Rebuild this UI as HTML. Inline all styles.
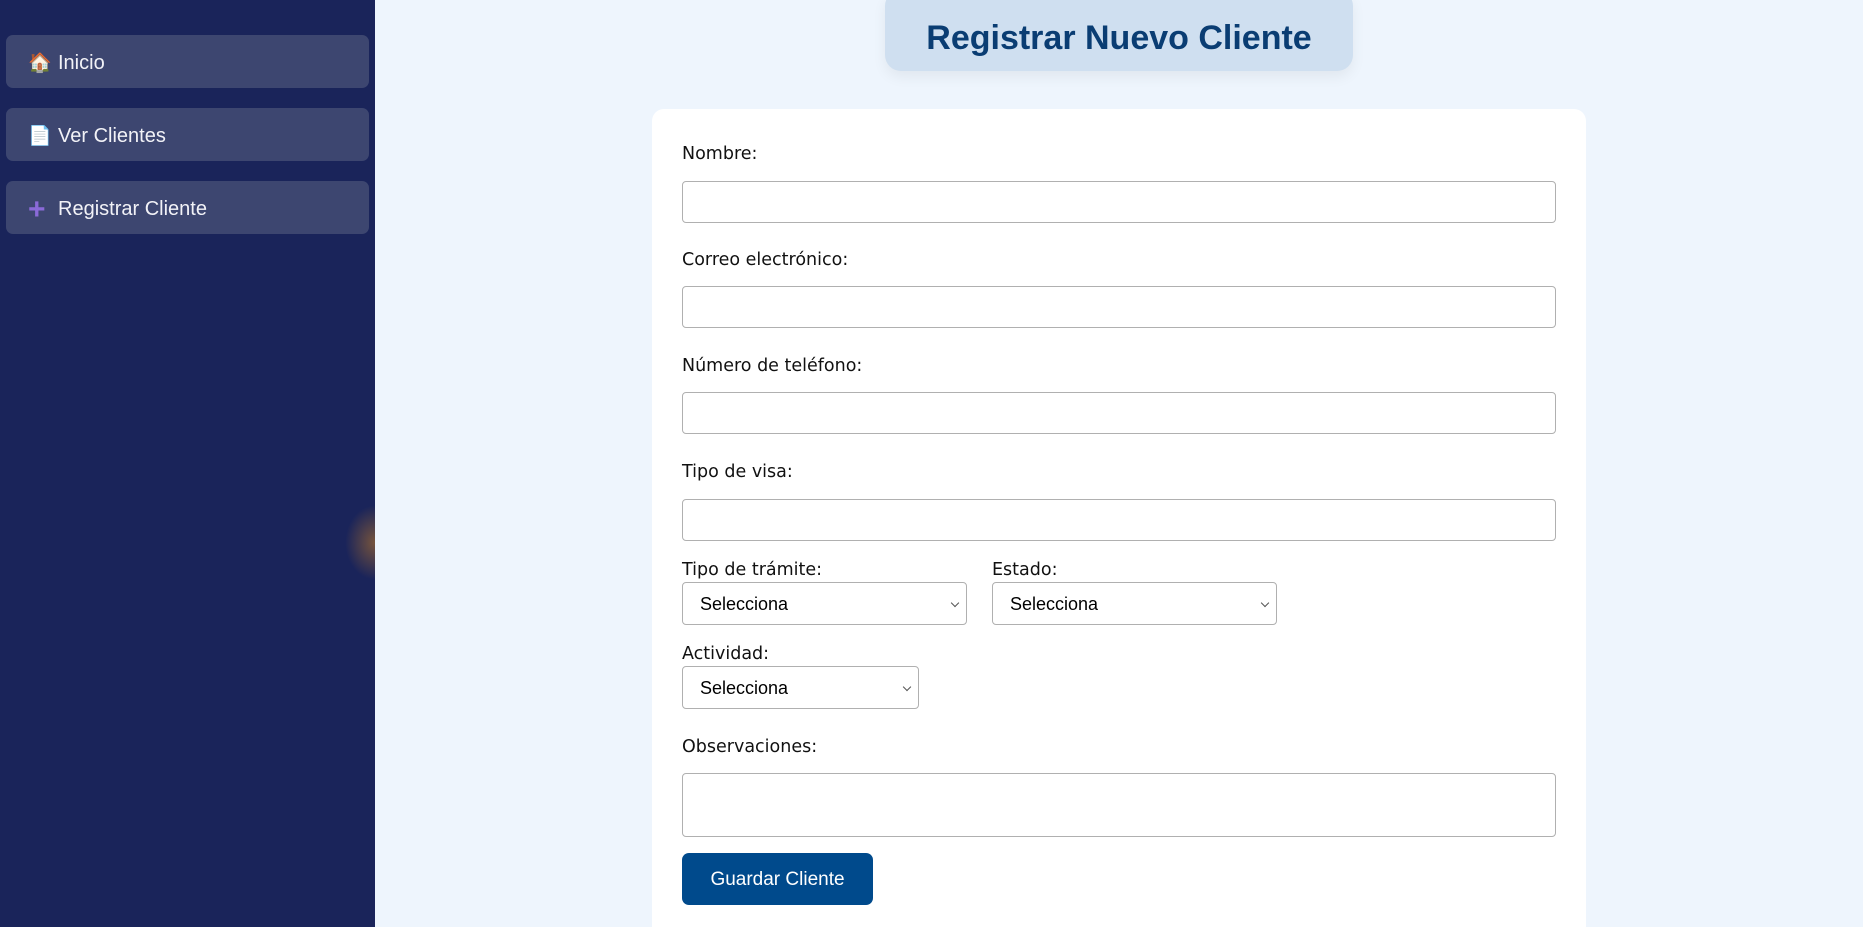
<!DOCTYPE html>
<html><head><meta charset="utf-8"><style>
*{box-sizing:border-box;margin:0;padding:0}
html{width:1863px;height:927px;overflow:hidden}
body{width:1863px;height:927px;overflow:hidden;background:#eef5fd;font-family:"Liberation Sans","DejaVu Sans",sans-serif;position:relative}
.side{position:absolute;left:0;top:0;width:375px;height:927px;background:#1a245a;overflow:hidden}
.glow{position:absolute;left:345px;top:505px;width:60px;height:75px;border-radius:50%;background:radial-gradient(ellipse at center,rgba(150,100,50,.75),rgba(26,36,90,0) 70%)}
.nav{position:absolute;left:6px;width:363px;height:53px;background:#3d4670;border-radius:7px;color:#f2f2f7;font-size:20px;line-height:57px;padding-left:52px}
.nav .ic{position:absolute;left:22px;top:0;font-size:19px}
.title{position:absolute;left:885px;top:-10px;width:468px;height:81px;background:#cfdff0;border-radius:16px;box-shadow:0 6px 14px rgba(0,0,0,.06);text-align:center;line-height:96px;color:#0a3d73;font-weight:bold;font-size:34px}
.card{position:absolute;left:652px;top:109px;width:934px;height:830px;background:#fff;border-radius:12px}
.l{position:absolute;left:682px;color:#111;font-family:"DejaVu Sans","Liberation Sans",sans-serif;font-size:17.5px}
.in{position:absolute;left:682px;width:874px;height:42px;border:1px solid #b0b0b0;border-radius:4px;background:#fff}
.sel{position:absolute;height:43px;border:1px solid #b0b0b0;border-radius:4px;background:#fff;font-size:18px;color:#000;line-height:43px;padding-left:17px}
.sel:after{content:"";position:absolute;right:8px;top:17px;width:5px;height:5px;border-right:1px solid #555;border-bottom:1px solid #555;transform:rotate(45deg)}
.btn{position:absolute;left:682px;top:853px;width:191px;height:52px;background:#004a8c;border-radius:7px;color:#fff;font-size:19px;text-align:center;line-height:54px}
</style></head><body>
<div class="side">
<div class="glow"></div>
<div class="nav" style="top:35px"><span class="ic">🏠</span>Inicio</div>
<div class="nav" style="top:108px"><span class="ic">📄</span>Ver Clientes</div>
<div class="nav" style="top:181px"><span class="ic" style="color:#8a6ad8;font-size:30px;font-weight:bold">+</span>Registrar Cliente</div>
</div>
<div class="title">Registrar Nuevo Cliente</div>
<div class="card"></div>
<div class="l" style="top:144px">Nombre:</div>
<div class="in" style="top:181px"></div>
<div class="l" style="top:250px">Correo electrónico:</div>
<div class="in" style="top:286px"></div>
<div class="l" style="top:356px">Número de teléfono:</div>
<div class="in" style="top:392px"></div>
<div class="l" style="top:462px">Tipo de visa:</div>
<div class="in" style="top:499px"></div>
<div class="l" style="top:560px">Tipo de trámite:</div>
<div class="l" style="top:560px;left:992px">Estado:</div>
<div class="sel" style="left:682px;top:582px;width:285px">Selecciona</div>
<div class="sel" style="left:992px;top:582px;width:285px">Selecciona</div>
<div class="l" style="top:644px">Actividad:</div>
<div class="sel" style="left:682px;top:666px;width:237px">Selecciona</div>
<div class="l" style="top:737px">Observaciones:</div>
<div class="in" style="top:773px;height:64px"></div>
<div class="btn">Guardar Cliente</div>
</body></html>
